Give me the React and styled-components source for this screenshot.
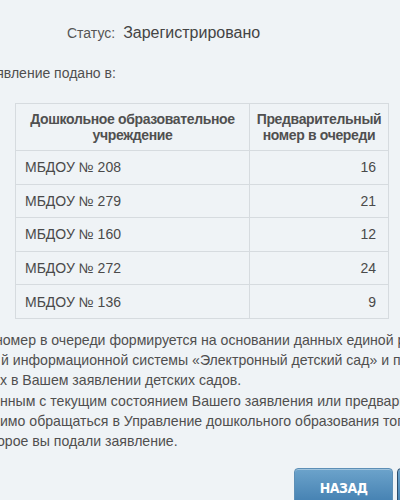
import React from 'react';
import styled, { createGlobalStyle } from 'styled-components';

const Global = createGlobalStyle`
  html, body {
    margin: 0;
    padding: 0;
    background: #eff3f6;
    overflow: hidden;
  }
  body {
    font-family: "Liberation Sans", Arial, sans-serif;
    color: #4a4a4a;
  }
`;

const Page = styled.div`
  width: 400px;
  height: 500px;
  overflow: hidden;
  background: #eff3f6;
`;

const StatusRow = styled.div`
  display: flex;
  align-items: baseline;
  gap: 8px;
  padding: 24px 0 0 67px;
  height: 30px;
`;

const StatusLabel = styled.span`
  font-size: 14px;
  color: #555;
`;

const StatusValue = styled.span`
  font-size: 16px;
  color: #444;
`;

const Lead = styled.div`
  margin: 11px 0 0 -20px;
  font-size: 14px;
  color: #4f4f4f;
  white-space: nowrap;
`;

const Table = styled.table`
  margin: 22px 0 0 15px;
  width: 374px;
  border-collapse: collapse;
  font-size: 14px;
  color: #4a4a4a;
`;

const Th = styled.th`
  border: 1.5px solid #d6dbdf;
  font-weight: bold;
  text-align: center;
  line-height: 16px;
  height: 46px;
  padding: 0 2px;
  letter-spacing: -0.35px;
  width: ${(p) => p.$w || 'auto'};
  color: #505050;
`;

const Td = styled.td`
  border: 1.5px solid #d6dbdf;
  height: 32.6px;
  padding: 0 12px 0 9px;
  text-align: ${(p) => (p.$num ? 'right' : 'left')};
`;

const Notes = styled.div`
  margin-top: 11px;
  font-size: 14.1px;
  line-height: 20.2px;
  color: #4f4f4f;
`;

const Line = styled.div`
  white-space: nowrap;
  margin-left: ${(p) => p.$shift}px;
`;

const Buttons = styled.div`
  display: flex;
  gap: 4px;
  margin: 17px 0 0 294px;
`;

const Button = styled.button`
  width: 99px;
  height: 40px;
  flex-shrink: 0;
  border: 1px solid ${(p) => (p.$dark ? '#2c4d6b' : '#5d8fb6')};
  border-radius: 4px;
  background: linear-gradient(#6ca3cb, #3f7cae);
  box-shadow: inset 0 1px 0 rgba(255, 255, 255, 0.35);
  color: #fff;
  font-family: "DejaVu Sans Condensed", "Liberation Sans Narrow", "Roboto", sans-serif;
  font-weight: bold;
  font-size: 14px;
  padding: 11px 0 0;
  letter-spacing: -0.5px;
  display: flex;
  justify-content: center;
  align-items: flex-start;
`;

const rows = [
  ['МБДОУ № 208', 16],
  ['МБДОУ № 279', 21],
  ['МБДОУ № 160', 12],
  ['МБДОУ № 272', 24],
  ['МБДОУ № 136', 9],
];

const notes = [
  [-5, 'номер в очереди формируется на основании данных единой региональной'],
  [1, 'й информационной системы «Электронный детский сад» и приоритетных'],
  [0, 'х в Вашем заявлении детских садов.'],
  [0, 'нным с текущим состоянием Вашего заявления или предварительным номером,'],
  [0, 'имо обращаться в Управление дошкольного образования того района,'],
  [-3, 'орое вы подали заявление.'],
];

export default function App() {
  return (
    <Page>
      <Global />
      <StatusRow>
        <StatusLabel>Статус:</StatusLabel>
        <StatusValue>Зарегистрировано</StatusValue>
      </StatusRow>
      <Lead>Заявление подано в:</Lead>
      <Table>
        <thead>
          <tr>
            <Th $w="229px">Дошкольное образовательное учреждение</Th>
            <Th>Предварительный номер в очереди</Th>
          </tr>
        </thead>
        <tbody>
          {rows.map(([name, n]) => (
            <tr key={name}>
              <Td>{name}</Td>
              <Td $num>{n}</Td>
            </tr>
          ))}
        </tbody>
      </Table>
      <Notes>
        {notes.map(([shift, text], i) => (
          <Line key={i} $shift={shift}>{text}</Line>
        ))}
      </Notes>
      <Buttons>
        <Button>НАЗАД</Button>
        <Button $dark>ДАЛЕЕ</Button>
      </Buttons>
    </Page>
  );
}
